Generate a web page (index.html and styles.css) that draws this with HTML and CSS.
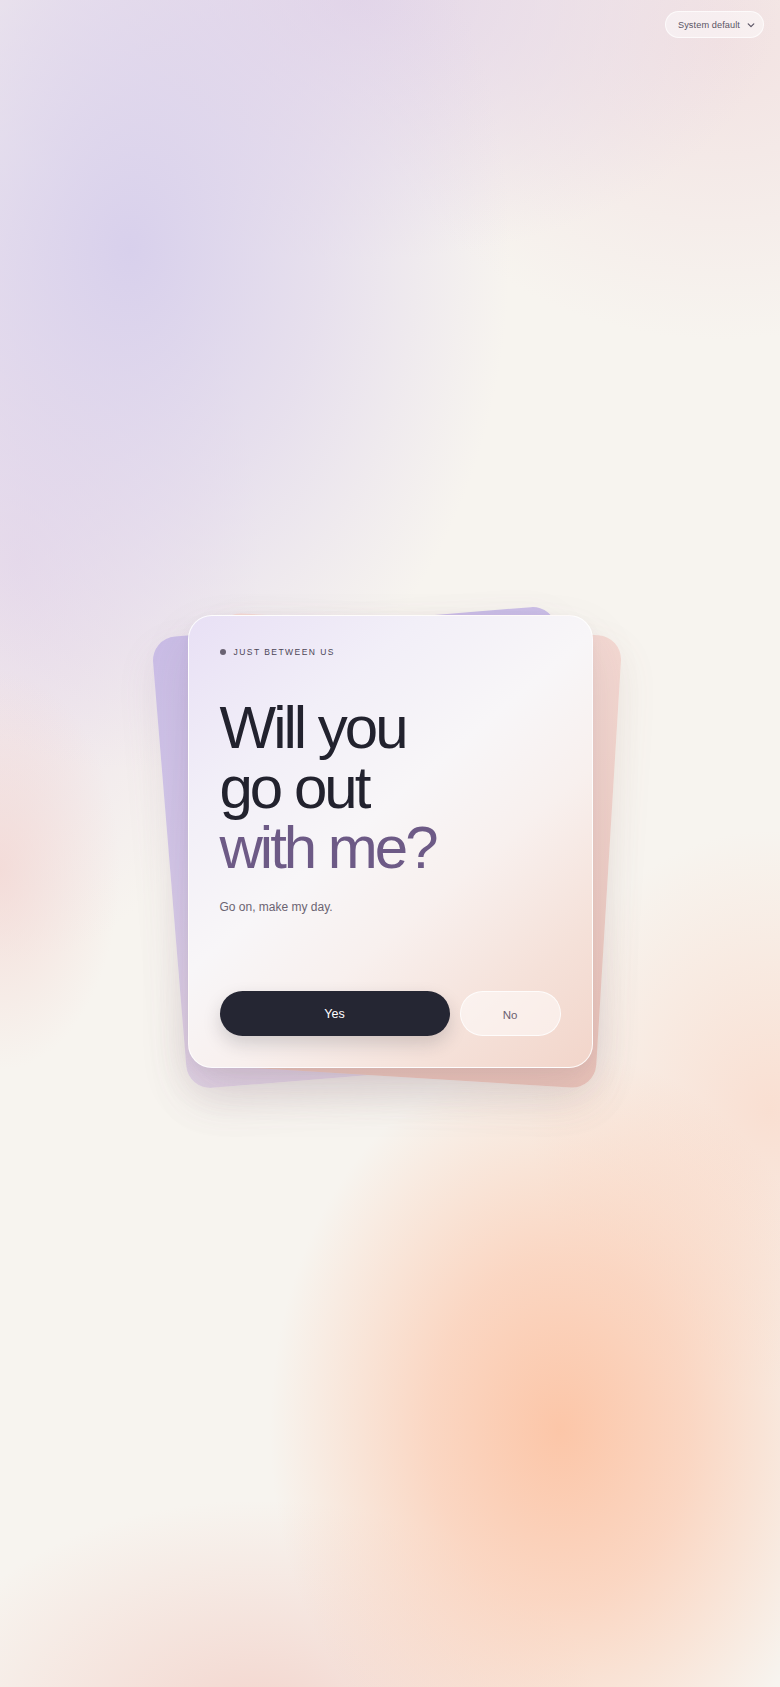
FILE: index.html
```html
<!DOCTYPE html>
<html lang="en">
<head>
<meta charset="utf-8">
<meta name="viewport" content="width=device-width, initial-scale=1">
<title>Will you go out with me?</title>
<link rel="stylesheet" href="styles.css">
</head>
<body>
<div class="theme-pill">
  <span>System default</span>
  <svg class="chev" width="10" height="10" viewBox="0 0 10 10" aria-hidden="true"><polyline points="2.2,3.8 5,6.6 7.8,3.8" fill="none" stroke="currentColor" stroke-width="1.2" stroke-linecap="round" stroke-linejoin="round"/></svg>
</div>
<main class="page">
  <div class="stack">
    <div class="back back-lilac"></div>
    <div class="back back-rose"></div>
    <section class="card">
      <div class="eyebrow"><span class="dot"></span>JUST BETWEEN US</div>
      <h1 class="title"><span class="line">Will you</span><span class="line">go out</span><span class="line accent">with me?</span></h1>
      <p class="sub">Go on, make my day.</p>
      <div class="actions">
        <button class="btn btn-yes">Yes</button>
        <button class="btn btn-no">No</button>
      </div>
    </section>
  </div>
</main>
</body>
</html>
```
FILE: styles.css
```css
html, body {
  margin: 0;
  padding: 0;
}
body {
  min-height: 100vh;
  font-family: "Liberation Sans", Arial, sans-serif;
  background-color: #f7f4ef;
  background-image:
    radial-gradient(ellipse 290px 380px at 560px 1430px, rgba(252,198,168,1) 0%, rgba(252,202,176,0.7) 45%, rgba(252,205,180,0) 100%),
    radial-gradient(ellipse 240px 280px at 770px 1110px, rgba(250,216,200,0.75), rgba(250,216,200,0) 100%),
    radial-gradient(ellipse 340px 220px at 260px 1720px, rgba(243,212,204,0.95), rgba(243,212,204,0) 100%),
    radial-gradient(ellipse 120px 200px at 0px 870px, rgba(243,212,208,0.7), rgba(243,212,208,0) 100%),
    radial-gradient(ellipse 380px 520px at 130px 250px, rgba(216,208,236,1) 0%, rgba(220,210,236,0.6) 50%, rgba(220,210,236,0) 100%),
    radial-gradient(ellipse 420px 260px at 360px 0px, rgba(228,214,232,1), rgba(228,214,232,0) 100%),
    radial-gradient(ellipse 360px 300px at 720px 40px, rgba(242,226,226,1), rgba(242,226,226,0) 100%),
    radial-gradient(ellipse 240px 400px at 20px 560px, rgba(232,216,232,0.8), rgba(232,216,232,0) 100%);
  background-repeat: no-repeat;
}
.theme-pill {
  position: absolute;
  top: 11px;
  right: 16px;
  height: 27px;
  box-sizing: border-box;
  display: flex;
  align-items: center;
  gap: 6px;
  padding: 0 7px 0 12px;
  border-radius: 999px;
  background: rgba(255,255,255,0.45);
  border: 1px solid rgba(255,255,255,0.7);
  color: #5a5464;
  font-size: 9.2px;
  letter-spacing: 0.01em;
}
.chev { display: block; }
.page {
  min-height: 100vh;
  display: flex;
  align-items: center;
  justify-content: center;
}
.stack {
  position: relative;
  width: 405px;
  height: 453px;
  margin-top: -4px;
}
.back {
  position: absolute;
  inset: 0;
  border-radius: 24px;
}
.back-lilac {
  background: linear-gradient(180deg, #cabde6 0%, #d3c6e8 50%, #e1d3e6 100%);
  transform: translate(-19px, 6px) rotate(-4.7deg);
  box-shadow: 0 16px 40px rgba(140,110,150,0.1);
}
.back-rose {
  background: linear-gradient(180deg, #f3d8d2 0%, #eecdc5 55%, #e9c2b8 100%);
  transform: translate(16px, 9px) rotate(3.5deg);
  box-shadow: 0 16px 40px rgba(160,110,100,0.1);
}
.card {
  position: relative;
  box-sizing: border-box;
  height: 100%;
  display: flex;
  flex-direction: column;
  padding: 30px 31px 31px;
  border-radius: 24px;
  border: 1px solid rgba(255,255,255,0.85);
  background: linear-gradient(140deg, #e8e0f5 0%, #f2eff8 25%, #f8f6f8 45%, #f8f0ee 62%, #f5e1d9 82%, #f2d5ca 100%);
  box-shadow: 0 24px 50px rgba(110,90,110,0.13), 0 4px 12px rgba(110,90,110,0.05);
}
.eyebrow {
  display: flex;
  align-items: center;
  gap: 8px;
  height: 12px;
  font-size: 8.5px;
  letter-spacing: 1.45px;
  color: #4c4656;
}
.dot {
  width: 6px;
  height: 6px;
  border-radius: 50%;
  background: #6a6272;
}
.title {
  margin: 40px 0 0;
  font-size: 60px;
  line-height: 60px;
  font-weight: 400;
  letter-spacing: -0.05em;
  color: #22222e;
  display: flex;
  flex-direction: column;
}
.line {
  display: block;
  height: 60px;
}
.accent { color: #6d5a86; }
.sub {
  margin: 20px 0 0;
  font-size: 12px;
  line-height: 18px;
  color: #6b6472;
}
.actions {
  margin-top: auto;
  display: flex;
  gap: 10px;
}
.btn {
  height: 45px;
  border-radius: 999px;
  font-family: "Liberation Sans", Arial, sans-serif;
  cursor: pointer;
  padding: 0;
}
.btn-yes {
  flex: 1;
  border: none;
  background: #252633;
  color: #ffffff;
  font-size: 12.5px;
  box-shadow: 0 8px 18px rgba(37,38,51,0.18);
}
.btn-no {
  width: 101px;
  border: 1px solid rgba(255,255,255,0.8);
  background: rgba(255,255,255,0.5);
  color: #6a6070;
  font-size: 11.5px;
  padding-top: 2px;
}
```
